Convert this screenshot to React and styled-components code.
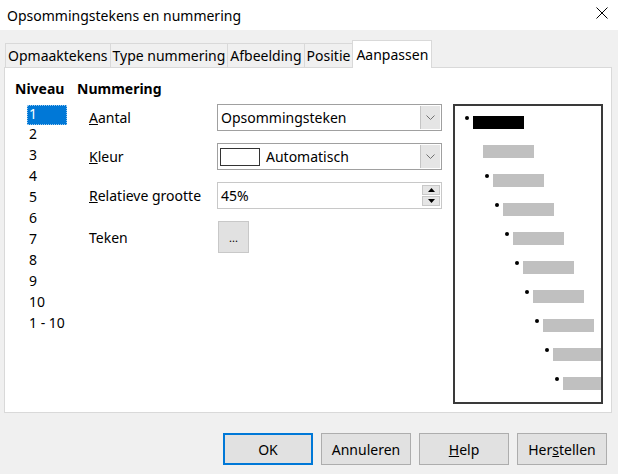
import styled, { createGlobalStyle } from "styled-components";

const GlobalStyle = createGlobalStyle`
  html, body {
    margin: 0;
    padding: 0;
    background: #f0f0f0;
  }
  body {
    font-family: "Noto Sans", "Liberation Sans", sans-serif;
    font-size: 14px;
    color: #000;
  }
`;

const Window = styled.div`
  width: 618px;
  height: 474px;
  background: #f0f0f0;
  display: flex;
  flex-direction: column;
  overflow: hidden;
`;

const TitleBar = styled.div`
  height: 30px;
  background: #fff;
  display: flex;
  align-items: center;
  justify-content: space-between;
  padding: 0 10px 0 7px;
  font-size: 14px;
`;

const CloseIcon = styled.svg`
  width: 12px;
  height: 12px;
  margin-bottom: 4px;
`;

const TabList = styled.div`
  display: flex;
  align-items: flex-end;
  margin: 9px 0 0 5px;
  height: 28px;
  position: relative;
  z-index: 1;
`;

const Tab = styled.div`
  height: ${(p) => (p.$active ? "28px" : "24px")};
  margin-bottom: ${(p) => (p.$active ? "-1px" : "0")};
  margin-left: -1px;
  padding: ${(p) => (p.$active ? "0 3px 1px" : "0 2px")};
  box-sizing: border-box;
  display: flex;
  align-items: center;
  justify-content: center;
  background: ${(p) => (p.$active ? "#fff" : "#f0f0f0")};
  border: 1px solid #d9d9d9;
  border-bottom: none;
  font-size: 14px;
  white-space: nowrap;
  &:first-child {
    margin-left: 0;
  }
`;

const Panel = styled.div`
  margin: 0 6px 0 4px;
  height: 346px;
  box-sizing: border-box;
  background: #fff;
  border: 1px solid #d9d9d9;
  padding: 11px 0 0 10px;
`;

const HeaderRow = styled.div`
  display: flex;
  height: 20px;
  line-height: 20px;
  font-weight: bold;
  font-size: 14px;
`;

const HeaderCell = styled.div`
  width: ${(p) => p.$width || "auto"};
`;

const PanelBody = styled.div`
  display: flex;
  margin-top: 5px;
`;

const LevelColumn = styled.div`
  width: 62px;
  flex-shrink: 0;
`;

const LevelList = styled.ul`
  list-style: none;
  margin: 1px 0 0 12px;
  padding: 0;
  width: 40px;
`;

const LevelItem = styled.li`
  height: ${(p) => (p.$selected ? "20px" : "21px")};
  line-height: 16px;
  box-sizing: border-box;
  padding-left: 1px;
  border: 1px ${(p) => (p.$selected ? "dotted #99c9ef" : "solid transparent")};
  background: ${(p) => (p.$selected ? "#0078d7" : "transparent")};
  color: ${(p) => (p.$selected ? "#fff" : "#000")};
  font-size: 14px;
  white-space: nowrap;
`;

const FormArea = styled.div`
  padding-left: 12px;
  display: grid;
  grid-template-columns: 128px 225px;
  grid-auto-rows: min-content;
  row-gap: 12px;
  align-items: center;
`;

const Label = styled.div`
  font-size: 14px;
  white-space: nowrap;
`;

const Select = styled.div`
  height: 27px;
  box-sizing: border-box;
  border: 1px solid #a0a0a0;
  background: #fff;
  display: flex;
  align-items: stretch;
`;

const SelectText = styled.div`
  flex: 1;
  display: flex;
  align-items: center;
  gap: 6px;
  padding-left: ${(p) => (p.$swatch ? "2px" : "3px")};
  font-size: 14px;
`;

const Swatch = styled.span`
  width: 40px;
  height: 18px;
  box-sizing: border-box;
  border: 1px solid #333;
  background: #fff;
`;

const DropButton = styled.div`
  width: 19px;
  background: #e5e5e5;
  border-left: 1px solid #c4c4c4;
  margin: 1px;
  display: flex;
  align-items: center;
  justify-content: center;
`;

const SpinField = styled.div`
  height: 27px;
  box-sizing: border-box;
  border: 1px solid #c8c8c8;
  background: #fff;
  display: flex;
`;

const SpinButtons = styled.div`
  width: 18px;
  margin: 2px 1px 2px 0;
  display: flex;
  flex-direction: column;
  gap: 1px;
`;

const SpinButton = styled.div`
  flex: 1;
  background: #e5e5e5;
  border: 1px solid #c8c8c8;
  display: flex;
  align-items: center;
  justify-content: center;
`;

const SmallButton = styled.div`
  width: 31px;
  height: 32px;
  box-sizing: border-box;
  margin-left: 1px;
  background: #e1e1e1;
  border: 1px solid #c8c8c8;
  display: flex;
  align-items: flex-end;
  justify-content: center;
  padding-bottom: 9px;
  font-size: 11px;
  line-height: 11px;
`;

const Preview = styled.div`
  margin-left: 11px;
  width: 150px;
  height: 300px;
  box-sizing: border-box;
  border: 2px solid #3a3a3a;
  background: #fff;
  overflow: hidden;
  padding-top: 10px;
  display: flex;
  flex-direction: column;
  gap: 16px;
`;

const PreviewRow = styled.div`
  display: flex;
  align-items: flex-start;
  margin-left: ${(p) => 10 + p.$level * 10}px;
  height: 13px;
  flex-shrink: 0;
`;

const Bullet = styled.span`
  width: 4px;
  height: 4px;
  border-radius: 50%;
  background: ${(p) => (p.$hidden ? "transparent" : "#000")};
  margin-top: 0;
  margin-right: 4px;
  flex-shrink: 0;
`;

const Bar = styled.span`
  width: 51px;
  height: 13px;
  flex-shrink: 0;
  background: ${(p) => (p.$active ? "#000" : "#c0c0c0")};
`;

const Footer = styled.div`
  display: flex;
  justify-content: flex-end;
  gap: 8px;
  padding: 20px 11px 0 0;
`;

const Button = styled.div`
  width: 90px;
  height: 32px;
  box-sizing: border-box;
  background: #e1e1e1;
  border: ${(p) => (p.$default ? "2px solid #0078d7" : "1px solid #adadad")};
  display: flex;
  align-items: center;
  justify-content: center;
  font-size: 14px;
`;

const Chevron = () => (
  <svg width="9" height="5" viewBox="0 0 9 5">
    <path d="M0.5 0.5 L4.5 4.5 L8.5 0.5" fill="none" stroke="#707070" strokeWidth="1" />
  </svg>
);

const Triangle = ({ down }) => (
  <svg width="7" height="4" viewBox="0 0 7 4">
    <path d={down ? "M0 0 H7 L3.5 4 Z" : "M0 4 H7 L3.5 0 Z"} fill="#000" />
  </svg>
);

const tabs = ["Opmaaktekens", "Type nummering", "Afbeelding", "Positie", "Aanpassen"];
const levels = ["1", "2", "3", "4", "5", "6", "7", "8", "9", "10", "1 - 10"];

export default function App() {
  return (
    <Window>
      <GlobalStyle />
      <TitleBar>
        <span>Opsommingstekens en nummering</span>
        <CloseIcon viewBox="0 0 12 12">
          <path d="M0.5 0.5 L11.5 11.5 M11.5 0.5 L0.5 11.5" stroke="#000" strokeWidth="1" />
        </CloseIcon>
      </TitleBar>

      <TabList>
        {tabs.map((t) => (
          <Tab key={t} $active={t === "Aanpassen"}>
            {t}
          </Tab>
        ))}
      </TabList>

      <Panel>
        <HeaderRow>
          <HeaderCell $width="62px">Niveau</HeaderCell>
          <HeaderCell>Nummering</HeaderCell>
        </HeaderRow>
        <PanelBody>
          <LevelColumn>
            <LevelList>
              {levels.map((l, i) => (
                <LevelItem key={l} $selected={i === 0}>
                  {l}
                </LevelItem>
              ))}
            </LevelList>
          </LevelColumn>

          <FormArea>
            <Label>
              <u>A</u>antal
            </Label>
            <Select>
              <SelectText>Opsommingsteken</SelectText>
              <DropButton>
                <Chevron />
              </DropButton>
            </Select>

            <Label>
              <u>K</u>leur
            </Label>
            <Select>
              <SelectText $swatch>
                <Swatch />
                Automatisch
              </SelectText>
              <DropButton>
                <Chevron />
              </DropButton>
            </Select>

            <Label>
              <u>R</u>elatieve grootte
            </Label>
            <SpinField>
              <SelectText>45%</SelectText>
              <SpinButtons>
                <SpinButton>
                  <Triangle />
                </SpinButton>
                <SpinButton>
                  <Triangle down />
                </SpinButton>
              </SpinButtons>
            </SpinField>

            <Label>Teken</Label>
            <SmallButton>...</SmallButton>
          </FormArea>

          <Preview>
            {Array.from({ length: 10 }, (_, i) => (
              <PreviewRow key={i} $level={i}>
                <Bullet $hidden={i === 1} />
                <Bar $active={i === 0} />
              </PreviewRow>
            ))}
          </Preview>
        </PanelBody>
      </Panel>

      <Footer>
        <Button $default>OK</Button>
        <Button>Annuleren</Button>
        <Button>
          <u>H</u>elp
        </Button>
        <Button>
          Her<u>s</u>tellen
        </Button>
      </Footer>
    </Window>
  );
}
